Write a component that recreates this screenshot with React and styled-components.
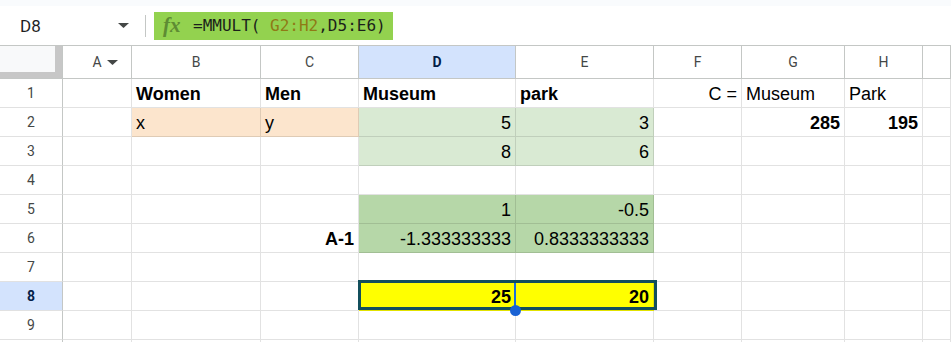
import React from 'react';
import styled, { createGlobalStyle } from 'styled-components';

const GlobalStyle = createGlobalStyle`
  html, body { margin: 0; padding: 0; background: #ffffff; overflow: hidden; }
  body { width: 951px; height: 342px; }
`;

const Page = styled.div`
  width: 951px;
  height: 342px;
  overflow: hidden;
  display: flex;
  flex-direction: column;
  font-family: Roboto, "Liberation Sans", sans-serif;
`;

const TopStrip = styled.div`
  flex: none;
  height: 6px;
  background: #f9fbfd;
`;

const FormulaBar = styled.div`
  flex: none;
  height: 39px;
  display: flex;
  align-items: center;
  background: #ffffff;
`;

const NameBox = styled.div`
  width: 145px;
  height: 100%;
  box-sizing: border-box;
  padding: 0 16px 0 20px;
  display: flex;
  align-items: center;
  justify-content: space-between;
  font-size: 17px;
  color: #1f1f1f;
`;

const Separator = styled.div`
  width: 1px;
  height: 22px;
  background: #c4c7c5;
`;

const FormulaBox = styled.div`
  margin-left: 8px;
  width: 239px;
  height: 28px;
  box-sizing: border-box;
  padding-left: 9px;
  display: flex;
  align-items: center;
  background: #93d24f;
`;

const FxMark = styled.span`
  font-family: "Liberation Serif", "DejaVu Serif", serif;
  font-style: italic;
  font-weight: 700;
  font-size: 21px;
  line-height: 1;
  color: #5e8c33;
  width: 18px;
`;

const FormulaText = styled.span`
  margin-left: 12px;
  font-family: "DejaVu Sans Mono", "Liberation Mono", monospace;
  font-size: 16px;
  color: #1b1f1b;
  white-space: pre;
`;

const RangeRef = styled.span`
  color: ${(p) => p.$color};
`;

const Grid = styled.div`
  flex: none;
  position: relative;
  display: grid;
  grid-template-columns: 63px 69px 129px 98px 157px 138px 88px 103px 78px 1fr;
  grid-template-rows: 33px repeat(10, 29px);
  border-top: 1px solid #c4c7c5;
`;

const Corner = styled.div`
  box-sizing: border-box;
  border-right: 1px solid #c4c7c5;
  border-bottom: 1px solid #c4c7c5;
  display: flex;
`;

const CornerFill = styled.div`
  flex: 1;
  background: #f8f9fa;
  border-right: 7px solid #c7c7c7;
  border-bottom: 6px solid #c7c7c7;
`;

const ColHeader = styled.div`
  box-sizing: border-box;
  border-right: 1px solid #c4c7c5;
  border-bottom: 1px solid #c4c7c5;
  background: ${(p) => (p.$active ? '#d3e3fd' : '#ffffff')};
  color: ${(p) => (p.$active ? '#041e49' : '#444746')};
  font-weight: ${(p) => (p.$active ? 700 : 400)};
  font-size: 14px;
  display: flex;
  align-items: center;
  justify-content: center;
  gap: 5px;
  padding-left: ${(p) => (p.$menu ? '16px' : '0')};
`;

const RowHeader = styled.div`
  box-sizing: border-box;
  border-right: 1px solid #c4c7c5;
  border-bottom: 1px solid #e1e1e1;
  background: ${(p) => (p.$active ? '#d3e3fd' : '#ffffff')};
  color: ${(p) => (p.$active ? '#041e49' : '#444746')};
  font-weight: ${(p) => (p.$active ? 700 : 400)};
  font-size: 14px;
  display: flex;
  align-items: center;
  justify-content: center;
`;

const Cell = styled.div`
  box-sizing: border-box;
  border-right: 1px solid rgba(0, 0, 0, 0.115);
  border-bottom: 1px solid rgba(0, 0, 0, 0.115);
  background: ${(p) => p.$bg || '#ffffff'};
  font-family: "Liberation Sans", Arial, sans-serif;
  font-size: 18px;
  line-height: 21px;
  font-weight: ${(p) => (p.$bold ? 700 : 400)};
  color: #000000;
  padding: 0 4px 2px 4px;
  display: flex;
  align-items: flex-end;
  justify-content: ${(p) => (p.$right ? 'flex-end' : 'flex-start')};
  white-space: nowrap;
  overflow: hidden;
`;

const RangeOutline = styled.div`
  position: absolute;
  left: 358px;
  top: 234px;
  width: 299px;
  height: 30px;
  box-sizing: border-box;
  border: 3px solid #134f5c;
  z-index: 2;
  pointer-events: none;
`;

const ActiveEdge = styled.div`
  position: absolute;
  left: 514px;
  top: 237px;
  width: 2px;
  height: 24px;
  background: #1a6fdc;
  z-index: 3;
`;

const FillHandle = styled.div`
  position: absolute;
  left: 510px;
  top: 259px;
  width: 11px;
  height: 11px;
  border-radius: 50%;
  background: #1a62d4;
  z-index: 4;
`;

const Caret = ({ w = 11, h = 5, color = '#444746' }) => (
  <svg width={w} height={h} viewBox="0 0 11 5" aria-hidden="true">
    <path d="M0 0 H11 L5.5 5 Z" fill={color} />
  </svg>
);

// Column I is only partly in view; its label sits beyond the right edge.
const COLS = ['A', 'B', 'C', 'D', 'E', 'F', 'G', 'H', 'I'];
const VISIBLE_LABELS = new Set(['A', 'B', 'C', 'D', 'E', 'F', 'G', 'H']);

const PEACH = '#fce5cd';
const LIGHT_GREEN = '#d9ead3';
const GREEN = '#b6d7a8';
const YELLOW = '#ffff00';

const DATA = {
  1: {
    B: { v: 'Women', bold: true },
    C: { v: 'Men', bold: true },
    D: { v: 'Museum', bold: true },
    E: { v: 'park', bold: true },
    F: { v: 'C =', right: true },
    G: { v: 'Museum' },
    H: { v: 'Park' },
  },
  2: {
    B: { v: 'x', bg: PEACH },
    C: { v: 'y', bg: PEACH },
    D: { v: '5', bg: LIGHT_GREEN, right: true },
    E: { v: '3', bg: LIGHT_GREEN, right: true },
    G: { v: '285', bold: true, right: true },
    H: { v: '195', bold: true, right: true },
  },
  3: {
    D: { v: '8', bg: LIGHT_GREEN, right: true },
    E: { v: '6', bg: LIGHT_GREEN, right: true },
  },
  5: {
    D: { v: '1', bg: GREEN, right: true },
    E: { v: '-0.5', bg: GREEN, right: true },
  },
  6: {
    C: { v: 'A-1', bold: true, right: true },
    D: { v: '-1.333333333', bg: GREEN, right: true },
    E: { v: '0.8333333333', bg: GREEN, right: true },
  },
  8: {
    D: { v: '25', bg: YELLOW, bold: true, right: true },
    E: { v: '20', bg: YELLOW, bold: true, right: true },
  },
};

export default function App() {
  const rows = Array.from({ length: 10 }, (_, i) => i + 1);
  return (
    <Page>
      <GlobalStyle />
      <TopStrip />
      <FormulaBar>
        <NameBox>
          <span>D8</span>
          <Caret />
        </NameBox>
        <Separator />
        <FormulaBox>
          <FxMark>fx</FxMark>
          <FormulaText>
            =MMULT( <RangeRef $color="#8f7a16">G2:H2</RangeRef>,D5:E6)
          </FormulaText>
        </FormulaBox>
      </FormulaBar>
      <Grid>
        <Corner>
          <CornerFill />
        </Corner>
        {COLS.map((c) => (
          <ColHeader key={c} $active={c === 'D'} $menu={c === 'A'}>
            {VISIBLE_LABELS.has(c) && <span>{c}</span>}
            {c === 'A' && <Caret />}
          </ColHeader>
        ))}
        {rows.map((r) => (
          <React.Fragment key={r}>
            <RowHeader $active={r === 8}>{r <= 9 ? r : ''}</RowHeader>
            {COLS.map((c) => {
              const d = (DATA[r] && DATA[r][c]) || {};
              return (
                <Cell key={c} $bg={d.bg} $bold={d.bold} $right={d.right}>
                  {d.v}
                </Cell>
              );
            })}
          </React.Fragment>
        ))}
        <RangeOutline />
        <ActiveEdge />
        <FillHandle />
      </Grid>
    </Page>
  );
}
